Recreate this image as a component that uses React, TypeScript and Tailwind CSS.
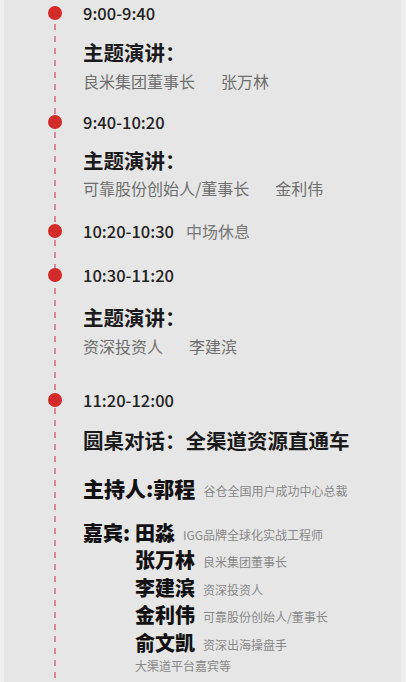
import React from "react";

const font = { fontFamily: '"Noto Sans CJK SC", "Noto Sans", sans-serif' };

function Dot() {
  return <div className="w-[14px] h-[14px] rounded-full bg-[#d32a2a] ml-[48px] shrink-0" />;
}

function TimeRow({ time, extra, className = "" }: { time: string; extra?: string; className?: string }) {
  return (
    <div className={"flex items-center h-[26px] " + className}>
      <div className="w-[83px] flex items-center">
        <Dot />
      </div>
      <span className="text-[16.5px] font-medium text-[#222]">{time}</span>
      {extra && <span className="ml-[12px] text-[16px] text-[#777]">{extra}</span>}
    </div>
  );
}

function Indent({ children, className = "" }: { children: React.ReactNode; className?: string }) {
  return <div className={"pl-[83px] " + className}>{children}</div>;
}

const guests = [
  { name: "张万林", desc: "良米集团董事长" },
  { name: "李建滨", desc: "资深投资人" },
  { name: "金利伟", desc: "可靠股份创始人/董事长" },
  { name: "俞文凯", desc: "资深出海操盘手" },
];

export default function App() {
  return (
    <div className="w-[406px] h-[682px] overflow-hidden bg-[#efefef] flex" style={font}>
      <div className="ml-[4px] w-[397px] h-full bg-[#e6e6e6] relative">
        <div className="absolute left-[50px] top-[12px] w-[2px] h-[680px] bg-[repeating-linear-gradient(to_bottom,#dc8a93_0px,#dc8a93_6px,transparent_6px,transparent_12px)]" />
        <div className="relative -ml-[4px]">
          <TimeRow time="9:00-9:40" />
          <Indent className="mt-[12px] h-[28px] leading-[28px] text-[20.5px] font-bold text-[#1a1a1a]">主题演讲：</Indent>
          <Indent className="mt-[3px] h-[24px] leading-[24px] text-[16px] text-[#6e6e6e]">
            良米集团董事长<span className="ml-[26px]">张万林</span>
          </Indent>

          <TimeRow time="9:40-10:20" className="mt-[16px]" />
          <Indent className="mt-[11px] h-[28px] leading-[28px] text-[20.5px] font-bold text-[#1a1a1a]">主题演讲：</Indent>
          <Indent className="mt-[2px] h-[24px] leading-[24px] text-[16px] text-[#6e6e6e]">
            可靠股份创始人/董事长<span className="ml-[26px]">金利伟</span>
          </Indent>

          <TimeRow time="10:20-10:30" extra="中场休息" className="mt-[18px]" />

          <TimeRow time="10:30-11:20" className="mt-[18px]" />
          <Indent className="mt-[15px] h-[28px] leading-[28px] text-[20.5px] font-bold text-[#1a1a1a]">主题演讲：</Indent>
          <Indent className="mt-[3px] h-[24px] leading-[24px] text-[16px] text-[#6e6e6e]">
            资深投资人<span className="ml-[26px]">李建滨</span>
          </Indent>

          <TimeRow time="11:20-12:00" className="mt-[29px]" />
          <Indent className="mt-[13px] h-[28px] leading-[28px] text-[20.5px] font-bold text-[#1a1a1a]">圆桌对话：全渠道资源直通车</Indent>
          <Indent className="mt-[21px] h-[28px] flex items-center">
            <span className="text-[21px] font-black text-[#111]">主持人:郭程</span>
            <span className="ml-[8px] mt-[4px] text-[12px] text-[#888]">谷仓全国用户成功中心总裁</span>
          </Indent>

          <Indent className="mt-[16px]">
            <div className="flex items-center h-[27.5px]">
              <span className="w-[52px] text-[20px] font-black text-[#111]">嘉宾:</span>
              <span className="text-[20px] font-black text-[#111]">田淼</span>
              <span className="ml-[8px] mt-[4px] text-[12px] text-[#888]">IGG品牌全球化实战工程师</span>
            </div>
            {guests.map((g) => (
              <div key={g.name} className="flex items-center h-[27.5px] pl-[52px]">
                <span className="text-[20px] font-black text-[#111]">{g.name}</span>
                <span className="ml-[8px] mt-[4px] text-[12px] text-[#888]">{g.desc}</span>
              </div>
            ))}
            <div className="pl-[52px] h-[18px] leading-[18px] text-[12px] text-[#888]">大渠道平台嘉宾等</div>
          </Indent>
        </div>
      </div>
    </div>
  );
}
